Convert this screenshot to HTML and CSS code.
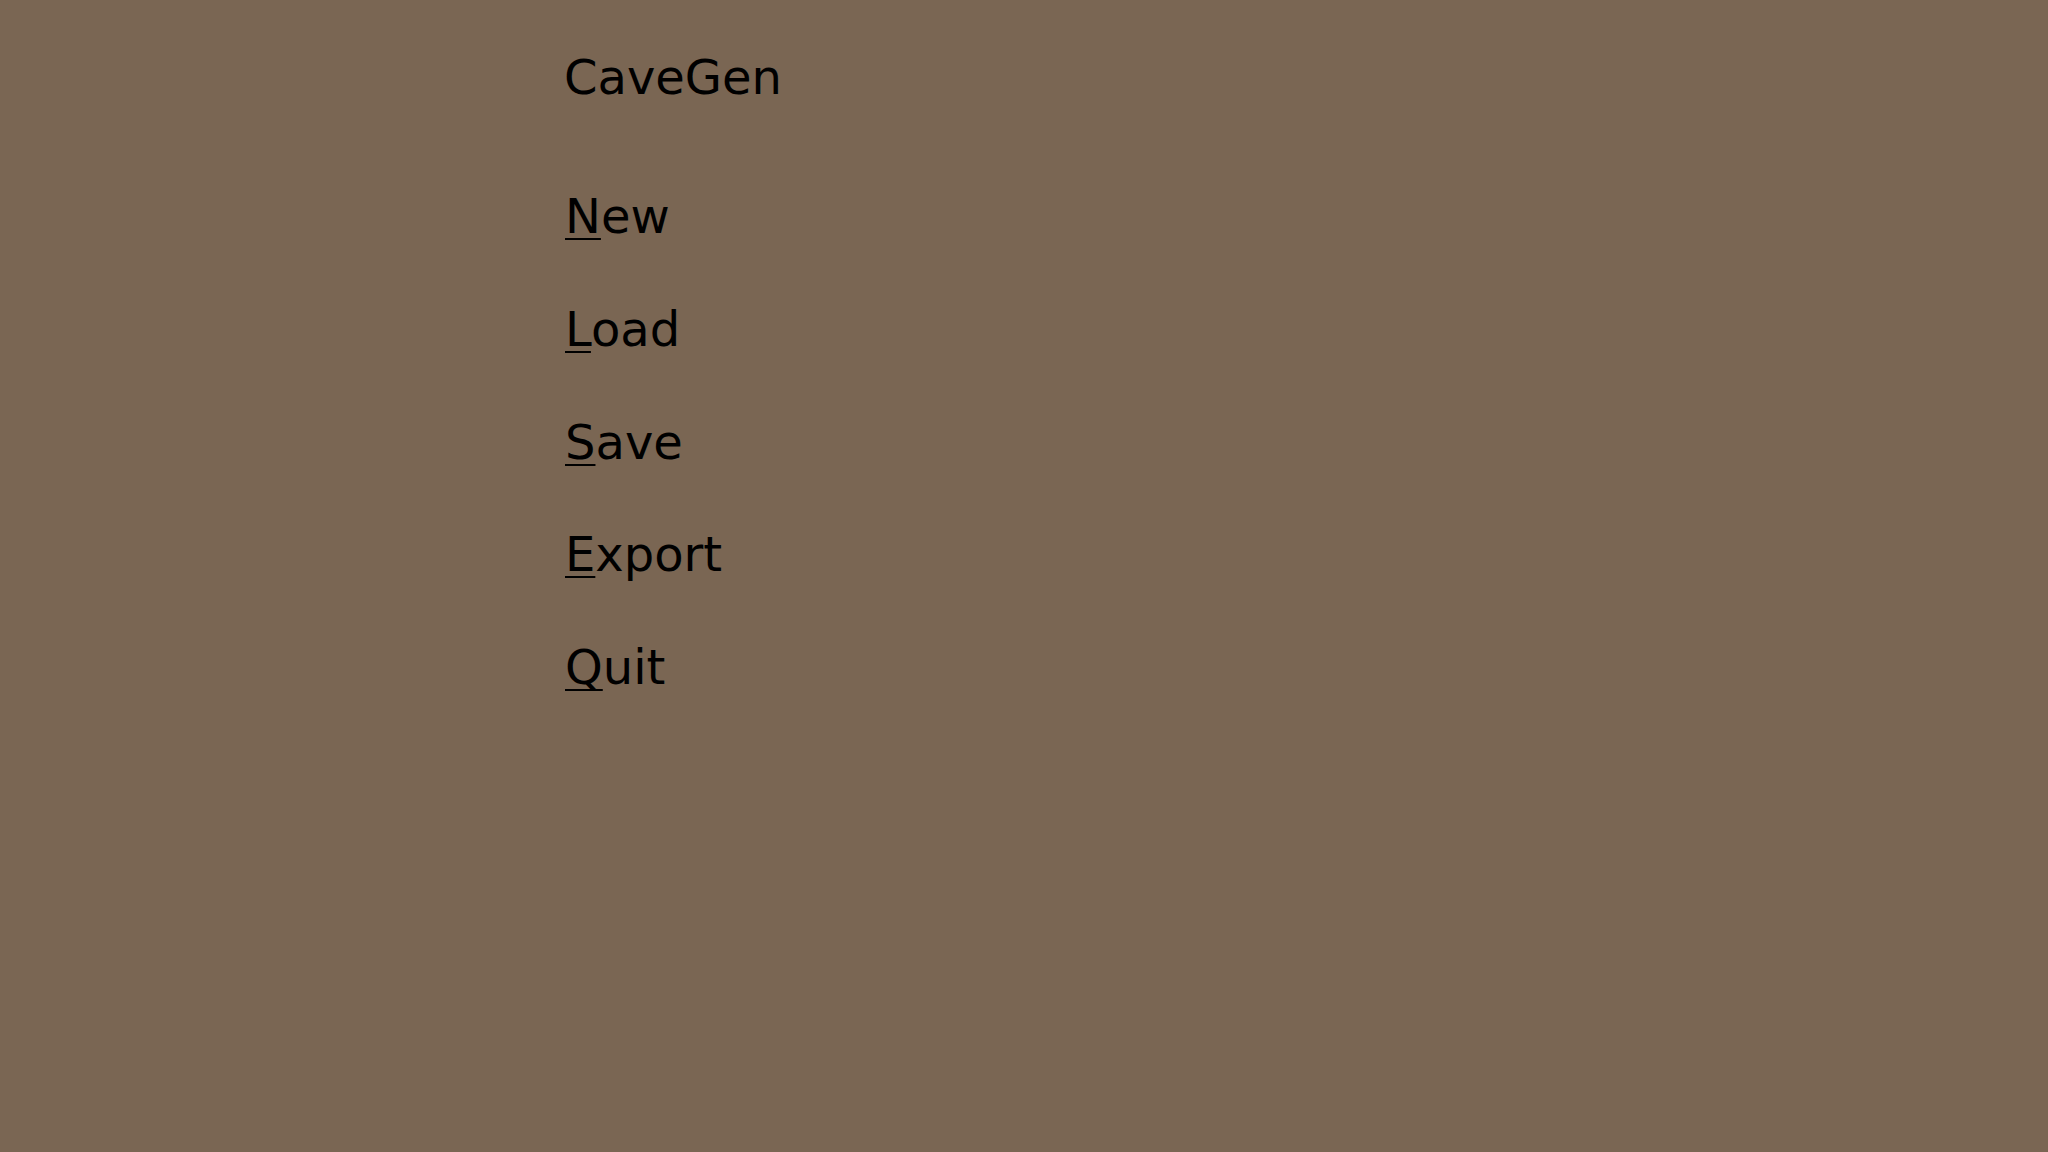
FILE: index.html
```html
<!DOCTYPE html>
<html>
<head>
<meta charset="utf-8">
<title>CaveGen</title>
<link rel="stylesheet" href="styles.css">
</head>
<body>
<div class="app">
  <h1 class="title">CaveGen</h1>
  <nav class="menu">
    <div class="item"><u>N</u>ew</div>
    <div class="item"><u>L</u>oad</div>
    <div class="item"><u>S</u>ave</div>
    <div class="item"><u>E</u>xport</div>
    <div class="item"><u>Q</u>uit</div>
  </nav>
</div>
</body>
</html>
```
FILE: styles.css
```css
html, body {
  margin: 0;
  padding: 0;
  background: #7a6653;
  width: 2048px;
  height: 1152px;
  overflow: hidden;
}
.app {
  font-family: "DejaVu Sans", sans-serif;
  font-size: 48px;
  color: #000;
  padding: 49px 0 0 565px;
  display: flex;
  flex-direction: column;
}
.title {
  margin: 0 0 0 -1px;
  font-size: 48px;
  font-weight: normal;
  line-height: 56px;
}
.menu {
  display: flex;
  flex-direction: column;
  gap: 56.75px;
  margin-top: 83px;
}
.item {
  line-height: 56px;
}
.item u {
  text-decoration-thickness: 2px;
  text-underline-offset: 5px;
  text-decoration-skip-ink: none;
}
```
